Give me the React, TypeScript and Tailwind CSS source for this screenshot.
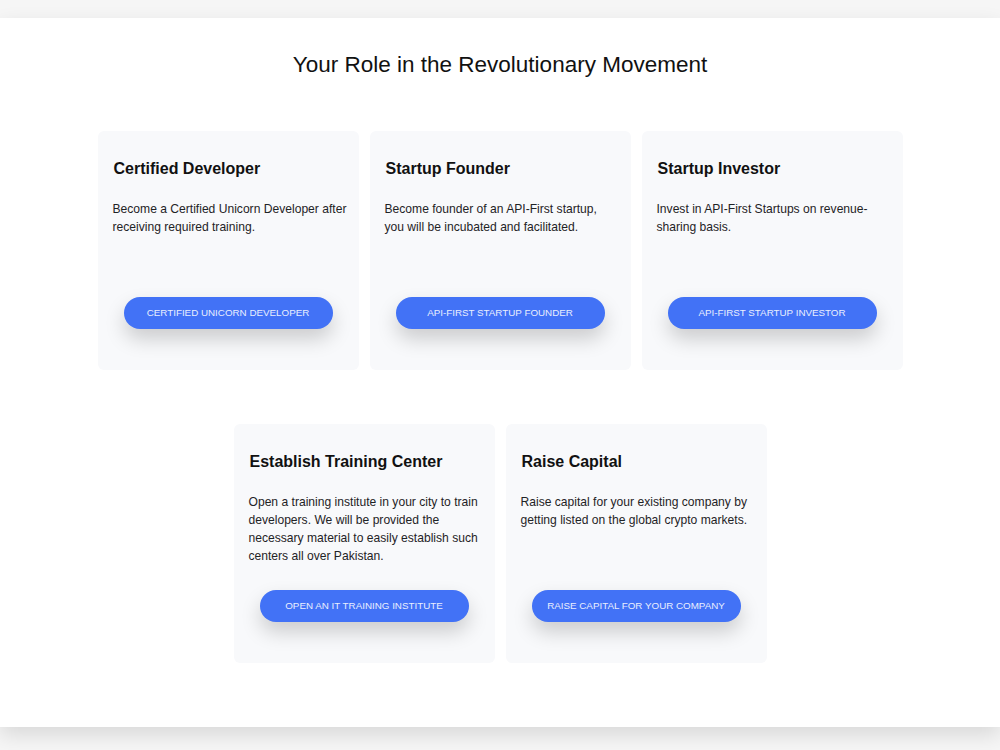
import React from "react";

const cards = [
  { title: "Certified Developer", text: "Become a Certified Unicorn Developer after receiving required training.", btn: "Certified Unicorn Developer" },
  { title: "Startup Founder", text: "Become founder of an API-First startup, you will be incubated and facilitated.", btn: "API-First Startup Founder" },
  { title: "Startup Investor", text: "Invest in API-First Startups on revenue-sharing basis.", btn: "API-First Startup Investor" },
  { title: "Establish Training Center", text: "Open a training institute in your city to train developers. We will be provided the necessary material to easily establish such centers all over Pakistan.", btn: "Open an IT Training Institute" },
  { title: "Raise Capital", text: "Raise capital for your existing company by getting listed on the global crypto markets.", btn: "Raise Capital for your Company" },
];

function Card({ c }: { c: (typeof cards)[number] }) {
  return (
    <div className="w-[261px] h-[239px] bg-[#f8f9fb] rounded-[6px] pt-[28px] flex flex-col">
      <div className="pl-[15px] pr-[11px]">
        <h3 className="text-[16px] leading-[20px] font-bold text-[#111] pl-[1px]">{c.title}</h3>
        <p className="mt-[21px] text-[12.1px] leading-[18px] text-[#1f2326] h-[72px]">{c.text}</p>
      </div>
      <div className="mt-[25px] flex justify-center">
        <button className="w-[209px] h-[32px] rounded-full bg-[#4272f6] text-[#e9eefe] text-[9.8px] uppercase shadow-[0_10px_20px_rgba(0,0,0,0.18)]">
          {c.btn}
        </button>
      </div>
    </div>
  );
}

export default function App() {
  return (
    <div className="min-h-[750px] bg-[#f6f6f6] pt-[18px] pb-[23px]" style={{ fontFamily: '"Liberation Sans", Arial, sans-serif' }}>
      <section className="bg-white h-[709px] shadow-[0_8px_20px_rgba(0,0,0,0.12)] pt-[32px]">
        <h2 className="text-center text-[22.5px] leading-[30px] text-[#111]">Your Role in the Revolutionary Movement</h2>
        <div className="mt-[51px] flex flex-wrap justify-center gap-x-[11px] gap-y-[54px] w-[806px] mx-auto">
          {cards.map((c) => (
            <Card key={c.title} c={c} />
          ))}
        </div>
      </section>
    </div>
  );
}
